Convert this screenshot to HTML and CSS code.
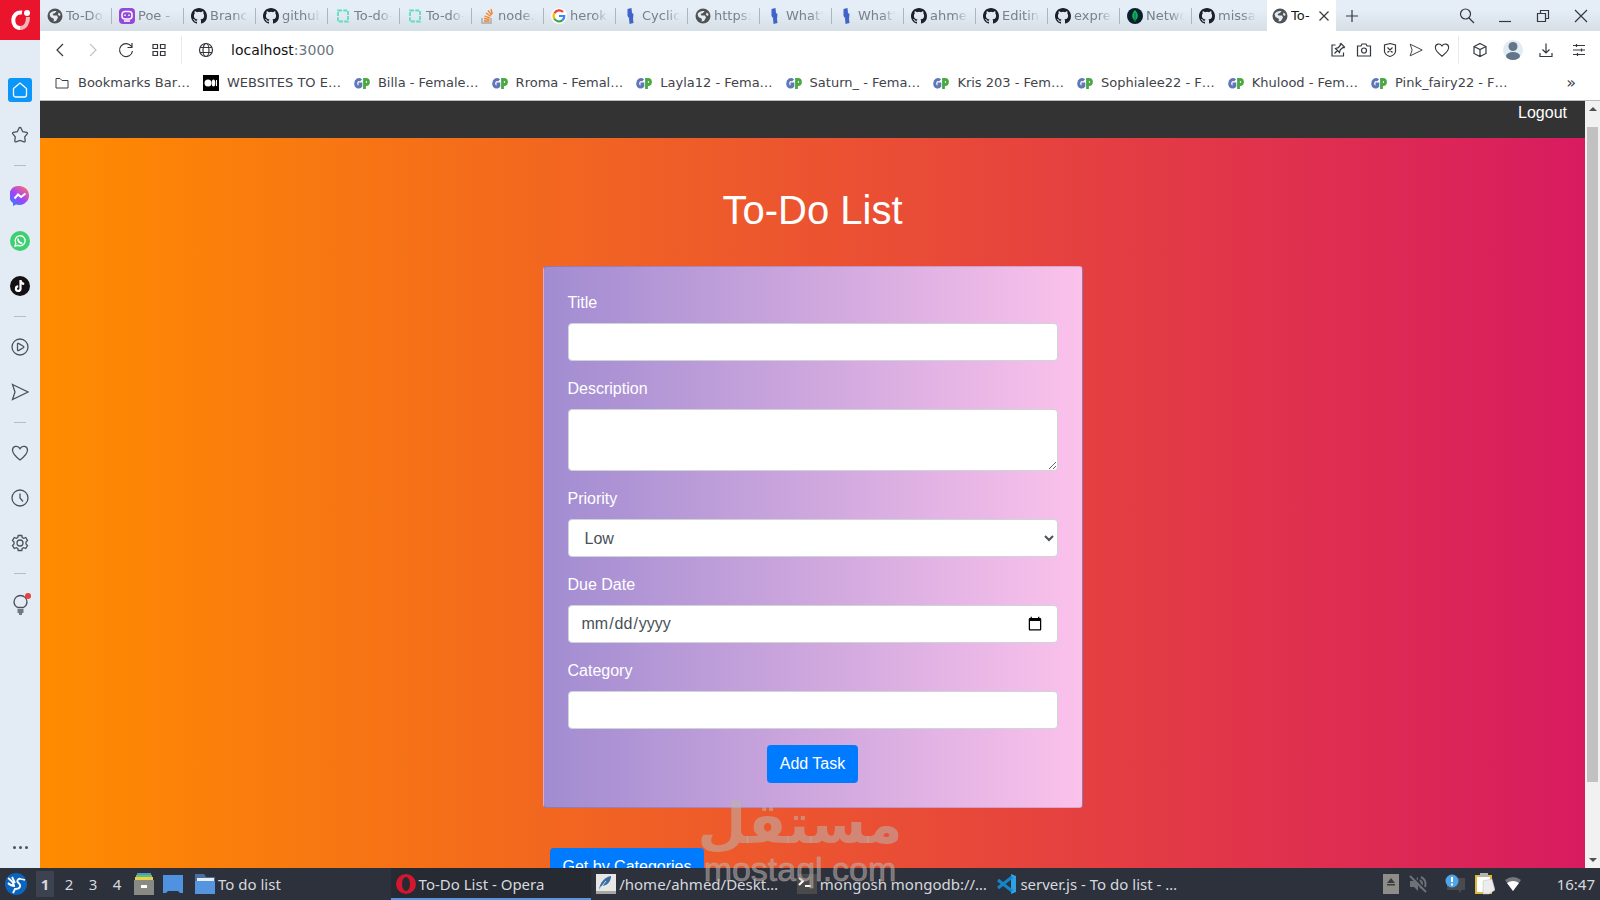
FILE: index.html
```
<!DOCTYPE html>
<html lang="en">
<head>
    <meta charset="UTF-8">
    <meta name="viewport" content="width=device-width">
    <title>To-Do List</title>
    <link rel="stylesheet" href="styles.css">
</head>
<body>
<svg class="sprite" aria-hidden="true">
    <symbol id="earth" viewBox="0 0 16 16"><circle cx="8" cy="8" r="7.5" fill="#505356"/><path d="M2.500 6C4 3.500 7 2.500 9.500 3L8 5 5.500 6l1 1.500H10l1 2-2 3.500-2.500.5.500-2.500L3.500 9zM11.500 4.500l2 1.500-.5 2-2-1z" fill="#e4ebf2"/></symbol>
    <symbol id="github" viewBox="0 0 16 16"><path fill="#1b2029" d="M8 0C3.58 0 0 3.58 0 8c0 3.54 2.29 6.53 5.47 7.59.4.07.55-.17.55-.38 0-.19-.01-.82-.01-1.49-2.01.37-2.53-.49-2.69-.94-.09-.23-.48-.94-.82-1.13-.28-.15-.68-.52-.01-.53.63-.01 1.08.58 1.23.82.72 1.21 1.87.87 2.33.66.07-.52.28-.87.51-1.07-1.78-.2-3.64-.89-3.64-3.95 0-.87.31-1.59.82-2.15-.08-.2-.36-1.02.08-2.12 0 0 .67-.21 2.2.82a7.6 7.6 0 0 1 4 0c1.53-1.04 2.2-.82 2.2-.82.44 1.1.16 1.92.08 2.12.51.56.82 1.27.82 2.15 0 3.07-1.87 3.75-3.65 3.95.29.25.54.73.54 1.48 0 1.07-.01 1.93-.01 2.2 0 .21.15.46.55.38A8.01 8.01 0 0 0 16 8c0-4.42-3.58-8-8-8z"/></symbol>
    <symbol id="poe" viewBox="0 0 16 16"><rect width="16" height="16" rx="4" fill="#9548dc"/><rect x="3" y="3.500" width="10" height="7.500" rx="3" fill="none" stroke="#fff" stroke-width="1.500"/><path d="M6 6.500v1.500M10 6.500v1.500M5 13h6" stroke="#fff" stroke-width="1.500"/></symbol>
    <symbol id="dashed" viewBox="0 0 16 16"><path d="M3 2.500h10v11H3z" fill="none" stroke="#62dcc3" stroke-width="1.800" stroke-dasharray="4 1.200"/></symbol>
    <symbol id="stack" viewBox="0 0 16 16"><path d="M3 10v5h9v-5" fill="none" stroke="#a9a9a9" stroke-width="1.400"/><path d="M5 13h5.500M5 10.500l5.500.8M5.500 8l5.300 1.800M7 5l4.700 3.200M9 2.500l3.700 4.500M12 1l1.300 5" stroke="#f48024" stroke-width="1.300"/></symbol>
    <symbol id="google" viewBox="0 0 16 16"><circle cx="8" cy="8" r="8" fill="#fff"/><path d="M12 4A5.300 5.300 0 0 0 3.500 5.200" stroke="#ea4335" fill="none" stroke-width="2.200"/><path d="M3.400 5.200a5.300 5.300 0 0 0 0 5.600" stroke="#fbbc05" fill="none" stroke-width="2.200"/><path d="M3.400 10.800a5.300 5.300 0 0 0 8.200 1.300" stroke="#34a853" fill="none" stroke-width="2.200"/><path d="M11.500 12.200A5.300 5.300 0 0 0 13.300 8H8" stroke="#4285f4" fill="none" stroke-width="2.200"/></symbol>
    <symbol id="cyclic" viewBox="0 0 16 16"><path d="M4.500 1l4-1 .5 5 1.500 1-.5 5 .5 4-4 1-.5-6L4.500 8z" fill="#3f63c8"/></symbol>
    <symbol id="mongo" viewBox="0 0 16 16"><circle cx="8" cy="8" r="8" fill="#04212c"/><path d="M8 2c4 4 3.500 8 0 11C4.500 10 4 6 8 2z" fill="#13b258"/><path d="M8 5v9" stroke="#0c6b3a"/></symbol>
    <symbol id="gp" viewBox="0 0 16 16"><path d="M7 5.500C5 3.500 1.700 5 1.700 8.500S5 13 6.800 11V9H4.500" fill="none" stroke="#5f78b8" stroke-width="3"/><path d="M10.500 14V4.500h1.500a2.200 2.200 0 0 1 0 5h-1.500" fill="none" stroke="#4aa944" stroke-width="2.800"/></symbol>
    <symbol id="heart" viewBox="0 0 18 18"><path d="M9 16C4 12 1.500 9.500 1.500 6.200 1.500 2 6.800.8 9 4.600 11.200.8 16.500 2 16.500 6.200 16.500 9.500 14 12 9 16z"/></symbol>
    <symbol id="send" viewBox="0 0 18 18"><path d="M1.500 1.500L17 9 1.500 16.500 4 9z"/></symbol>
</svg>

<div class="desktop">
    <div class="browser">
        <aside class="sidebar">
            <a class="opera" href="#" aria-label="Opera menu">
                <svg width="40" height="40" viewBox="0 0 40 40"><path d="M28 17c0 7-3 11-8 11" fill="none" stroke="#f3b4bc" stroke-width="4"/><path d="M22 12.500c-11-1.500-11.500 15.500-2 15.500" fill="none" stroke="#fff" stroke-width="4"/><circle cx="27" cy="13" r="3" fill="#fff"/></svg>
            </a>
            <nav class="side-nav">
                <a class="side-item" href="#" aria-label="Home"><span class="home"><svg width="18" height="18" viewBox="0 0 18 18"><path d="M2.500 7.500L9 2l6.500 5.500v6.500a2 2 0 0 1-2 2h-9a2 2 0 0 1-2-2z"/></svg></span></a>
                <a class="side-item" href="#" aria-label="Pinboards"><svg width="18" height="18" viewBox="0 0 18 18"><path d="M9 1.500q.8 0 1.200 1l1.500 3.200 4 .7q1.200.4.500 1.500l-2.500 3 .5 4q0 1.300-1.200 1L9 14.500l-4 1.400q-1.200.3-1.200-1l.5-4-2.500-3q-.7-1.100.5-1.500l4-.7 1.500-3.200q.4-1 1.200-1z"/></svg></a>
                <hr>
                <a class="side-item" href="#" aria-label="Messenger"><svg width="20" height="20" viewBox="0 0 20 20"><defs><linearGradient id="msg" x1="0" y1="1" x2=".8" y2="0"><stop offset="0" stop-color="#1b8cff"/><stop offset=".5" stop-color="#9a45ff"/><stop offset="1" stop-color="#ff6a70"/></linearGradient></defs><path d="M10 0a10 9.500 0 1 1-4 18.500L3 20v-3A10 9.500 0 0 1 10 0z" fill="url(#msg)" stroke="none"/><path d="M4.500 12.500l3.500-4 3 2.500 4.500-3.500" stroke="#fff" stroke-width="2"/></svg></a>
                <a class="side-item" href="#" aria-label="WhatsApp"><svg width="20" height="20" viewBox="0 0 20 20"><circle cx="10" cy="10" r="10" fill="#3cd070" stroke="none"/><path d="M5 15l.8-2.700A5 5 0 1 1 8 14.300z" stroke="#fff"/><path d="M8 7.500c0 3 1.800 4.500 4.300 4.800" stroke="#fff" stroke-width="1.700"/></svg></a>
                <a class="side-item" href="#" aria-label="TikTok"><svg width="20" height="20" viewBox="0 0 20 20"><circle cx="10" cy="10" r="10" fill="#151014" stroke="none"/><path d="M10.500 4v9a2.300 2.300 0 1 1-2.300-2.700M10.500 4.500c.5 2.500 2 3.300 3.700 3.500" stroke="#fff" stroke-width="2.200"/></svg></a>
                <hr>
                <a class="side-item" href="#" aria-label="Player"><svg width="18" height="18" viewBox="0 0 18 18"><circle cx="9" cy="9" r="8"/><path d="M6.500 6q0-1 1-.6l4.800 2.800q1 .8 0 1.600l-4.800 2.800q-1 .4-1-.6z"/></svg></a>
                <a class="side-item" href="#" aria-label="My Flow"><svg width="18" height="18"><use href="#send"/></svg></a>
                <hr>
                <a class="side-item" href="#" aria-label="Bookmarks"><svg width="18" height="18"><use href="#heart"/></svg></a>
                <a class="side-item" href="#" aria-label="History"><svg width="18" height="18" viewBox="0 0 18 18"><circle cx="9" cy="9" r="8"/><path d="M9 4.500V9l3 3.500"/></svg></a>
                <a class="side-item" href="#" aria-label="Settings"><svg width="18" height="18" viewBox="0 0 18 18"><circle cx="9" cy="9" r="3"/><path d="M7.200 1.500h3.600l.4 2 1.500.8 2-.8 1.800 3-1.500 1.500v2l1.500 1.500-1.800 3-2-.8-1.500.8-.4 2H7.200l-.4-2-1.500-.8-2 .8-1.800-3L3 10V8L1.500 6.500l1.800-3 2 .8 1.500-.8z"/></svg></a>
                <hr>
                <a class="side-item" href="#" aria-label="Tips"><svg width="22" height="22" viewBox="0 0 22 22"><path d="M8.500 14.500C6 13 5 11 5 9a6.500 6.500 0 0 1 13 0c0 2-1 4-3.500 5.500zM8.500 17h6M8.500 19h6M10 21h3"/><circle cx="19" cy="3" r="3" fill="#e5413e" stroke="none"/></svg></a>
            </nav>
            <button class="more" aria-label="More"><i></i><i></i><i></i></button>
        </aside>

        <div class="window">
            <div class="tabs">
                <a class="tab" href="#"><svg><use href="#earth"/></svg><span>To-Do</span></a>
                <a class="tab" href="#"><svg><use href="#poe"/></svg><span>Poe -</span></a>
                <a class="tab" href="#"><svg><use href="#github"/></svg><span>Branc</span></a>
                <a class="tab" href="#"><svg><use href="#github"/></svg><span>github</span></a>
                <a class="tab" href="#"><svg><use href="#dashed"/></svg><span>To-do-</span></a>
                <a class="tab" href="#"><svg><use href="#dashed"/></svg><span>To-do-</span></a>
                <a class="tab" href="#"><svg><use href="#stack"/></svg><span>node.j</span></a>
                <a class="tab" href="#"><svg><use href="#google"/></svg><span>herok</span></a>
                <a class="tab" href="#"><svg><use href="#cyclic"/></svg><span>Cyclic</span></a>
                <a class="tab" href="#"><svg><use href="#earth"/></svg><span>https:</span></a>
                <a class="tab" href="#"><svg><use href="#cyclic"/></svg><span>What'</span></a>
                <a class="tab" href="#"><svg><use href="#cyclic"/></svg><span>What'</span></a>
                <a class="tab" href="#"><svg><use href="#github"/></svg><span>ahme</span></a>
                <a class="tab" href="#"><svg><use href="#github"/></svg><span>Editin</span></a>
                <a class="tab" href="#"><svg><use href="#github"/></svg><span>expre</span></a>
                <a class="tab" href="#"><svg><use href="#mongo"/></svg><span>Netwo</span></a>
                <a class="tab" href="#"><svg><use href="#github"/></svg><span>missa</span></a>
                <div class="tab active"><svg><use href="#earth"/></svg><span>To-</span><button aria-label="Close tab"><svg width="12" height="12" viewBox="0 0 12 12"><path d="M1.500 1.500l9 9M10.500 1.500l-9 9"/></svg></button></div>
                <button class="new-tab" aria-label="New tab"><svg width="12" height="12" viewBox="0 0 12 12"><path d="M6 0v12M0 6h12"/></svg></button>
                <div class="win-buttons">
                    <button aria-label="Search tabs"><svg width="16" height="16" viewBox="0 0 16 16"><circle cx="6.500" cy="6" r="5"/><path d="M10 10l5 5"/></svg></button>
                    <button aria-label="Minimize"><svg width="14" height="14" viewBox="0 0 14 14"><path d="M1 12.500h12"/></svg></button>
                    <button aria-label="Restore"><svg width="14" height="14" viewBox="0 0 14 14"><path d="M1.500 4.500h8v8h-8zM4.500 4.500v-3h8v8h-3"/></svg></button>
                    <button aria-label="Close"><svg width="14" height="14" viewBox="0 0 14 14"><path d="M1 1l12 12M13 1L1 13"/></svg></button>
                </div>
            </div>

            <div class="address">
                <div class="nav-buttons">
                    <button aria-label="Back"><svg width="16" height="16" viewBox="0 0 16 16"><path d="M11 2L5 8l6 6"/></svg></button>
                    <button class="off" aria-label="Forward"><svg width="16" height="16" viewBox="0 0 16 16"><path d="M5 2l6 6-6 6"/></svg></button>
                    <button aria-label="Reload"><svg width="16" height="16" viewBox="0 0 16 16"><path d="M13.500 4.500A6.500 6.500 0 1 0 14.500 9M14 1v4.500H9.500"/></svg></button>
                    <button aria-label="Speed dial"><svg width="16" height="16" viewBox="0 0 16 16"><path d="M2 2.500h4.500v4H2zM9.500 2.500H14v4H9.500zM2 9.500h4.500v4H2zM9.500 9.500H14v4H9.500z"/></svg></button>
                </div>
                <div class="url">
                    <svg width="16" height="16" viewBox="0 0 16 16"><circle cx="8" cy="8" r="6.500"/><ellipse cx="8" cy="8" rx="3" ry="6.500"/><path d="M2 5.500h12M2 10.500h12"/></svg>
                    <span>localhost<em>:3000</em></span>
                </div>
                <div class="page-actions">
                    <button aria-label="Pin page"><svg width="16" height="16" viewBox="0 0 16 16"><path d="M5.500 3H2v11h11.500v-3.500M4.500 11.500l3-3M5.500 6.500l4 4 .8-2.800L13 5.500l1 .3.500-.8-3.500-3.500-.8.500.3 1-2.200 2.700z"/></svg></button>
                    <button aria-label="Snapshot"><svg width="16" height="16" viewBox="0 0 16 16"><path d="M1.500 4H5l1-2h4l1 2h3.500v10h-13z"/><circle cx="8" cy="8.500" r="2.500"/></svg></button>
                    <button aria-label="Ad blocker"><svg width="16" height="16" viewBox="0 0 16 16"><path d="M8 1.500l5.500 1.500v6.500Q13 13 8 14.500 3 13 2.500 9.500V3zM5.500 5.500l5 5M10.500 5.500l-5 5"/></svg></button>
                    <button aria-label="My Flow"><svg width="14" height="14"><use href="#send"/></svg></button>
                    <button aria-label="Add to bookmarks"><svg width="16" height="16"><use href="#heart"/></svg></button>
                </div>
                <div class="extensions">
                    <button aria-label="Extensions"><svg width="16" height="16" viewBox="0 0 16 16"><path d="M8 1.500l6 3v7l-6 3-6-3v-7zM2 4.500l6 3 6-3M8 7.500v7"/></svg></button>
                    <button aria-label="Profile"><svg width="20" height="20" viewBox="0 0 20 20"><circle cx="10" cy="10" r="10" fill="#e1ebf4" stroke="none"/><circle cx="10" cy="6.500" r="4.500" fill="#64758a" stroke="none"/><ellipse cx="10" cy="16" rx="7" ry="4" fill="#64758a" stroke="none"/></svg></button>
                    <button aria-label="Downloads"><svg width="16" height="16" viewBox="0 0 16 16"><path d="M8 1.500v9M4.500 7.500L8 11l3.500-3.500M2 11v3.500h12V11"/></svg></button>
                    <button aria-label="Easy setup"><svg width="16" height="16" viewBox="0 0 16 16"><path d="M2 3.500h12M2 8h12M2 12.500h12M5.500 2v3M10.500 6.500v3M6.500 11v3"/></svg></button>
                </div>
            </div>

            <nav class="bookmarks">
                <a href="#"><svg viewBox="0 0 16 16"><path d="M2 13V3.500h4l2 2h6V13z" fill="none" stroke="#3b3f44"/></svg>Bookmarks Bar…</a>
                <a href="#"><svg viewBox="0 0 16 16"><path d="M0 0h16v16H0z"/><circle cx="5" cy="8" r="3.500" fill="#fff"/><ellipse cx="10.500" cy="8" rx="1.800" ry="3.500" fill="#fff"/><path d="M13.500 5v6" stroke="#fff"/></svg>WEBSITES TO E…</a>
                <a href="#"><svg><use href="#gp"/></svg>Billa - Female…</a>
                <a href="#"><svg><use href="#gp"/></svg>Rroma - Femal…</a>
                <a href="#"><svg><use href="#gp"/></svg>Layla12 - Fema…</a>
                <a href="#"><svg><use href="#gp"/></svg>Saturn_ - Fema…</a>
                <a href="#"><svg><use href="#gp"/></svg>Kris 203 - Fem…</a>
                <a href="#"><svg><use href="#gp"/></svg>Sophialee22 - F…</a>
                <a href="#"><svg><use href="#gp"/></svg>Khulood - Fem…</a>
                <a href="#"><svg><use href="#gp"/></svg>Pink_fairy22 - F…</a>
                <button aria-label="More bookmarks">»</button>
            </nav>

            <div class="viewport">
                <main class="page">
                    <header class="navbar"><a href="#">Logout</a></header>
                    <div class="container">
                        <h1>To-Do List</h1>
                        <form class="card">
                            <div class="form-group">
                                <label for="title">Title</label>
                                <input class="form-control" id="title" type="text">
                            </div>
                            <div class="form-group">
                                <label for="description">Description</label>
                                <textarea class="form-control" id="description" rows="2"></textarea>
                            </div>
                            <div class="form-group">
                                <label for="priority">Priority</label>
                                <select class="form-control" id="priority">
                                    <option>Low</option>
                                    <option>Medium</option>
                                    <option>High</option>
                                </select>
                            </div>
                            <div class="form-group">
                                <label for="date">Due Date</label>
                                <input class="form-control" id="date" type="date">
                            </div>
                            <div class="form-group">
                                <label for="category">Category</label>
                                <input class="form-control" id="category" type="text">
                            </div>
                            <button class="btn" type="button">Add Task</button>
                        </form>
                        <div class="actions">
                            <button class="btn" type="button">Get by Categories</button>
                        </div>
                    </div>
                </main>
                <div class="scrollbar">
                    <i class="up"></i>
                    <div class="track"><div class="thumb"></div></div>
                    <i class="down"></i>
                </div>
            </div>
        </div>
    </div>

    <footer class="taskbar">
        <button class="start" aria-label="Menu"><svg width="22" height="22" viewBox="0 0 22 22"><circle cx="11" cy="11" r="11" fill="#0b65bd"/><path d="M3 5c3 2 5 4 6 7M7 4l3 6M3 10c2 2 4 3 7 3M20 7l-4-1c-3-1-5 2-2.500 4 3 2.500 2 6-3.500 6L8 20" fill="none" stroke="#fff" stroke-width="1.800"/></svg></button>
        <div class="desks">
            <button class="current">1</button>
            <button>2</button>
            <button>3</button>
            <button>4</button>
        </div>
        <div class="launchers">
            <button aria-label="Files"><svg width="20" height="22" viewBox="0 0 20 22"><path d="M3 0h14v3H3z" fill="#4a9ad4"/><path d="M2 2h16v3H2z" fill="#6bbf62"/><path d="M1 4h18v4H1z" fill="#e8cf52"/><path d="M0 7h20v15H0z" fill="#8a8a85"/><path d="M7 12h6v3H7z" fill="#fff"/></svg></button>
            <button aria-label="Show desktop"><svg width="20" height="20" viewBox="0 0 20 20"><path d="M0 1h20v18h-3l-2-2H5l-2 2H0z" fill="#4f93e0"/></svg></button>
        </div>
        <div class="tasks">
            <button class="task"><svg viewBox="0 0 20 20"><path d="M0 0h9l2 3h9v5H0z" fill="#4a6fa3"/><path d="M2 4h17v5H2z" fill="#e8eef5"/><path d="M0 7h20v13H0z" fill="#5595e0"/></svg>To do list</button>
            <button class="task open"><svg viewBox="0 0 20 20"><ellipse cx="10" cy="10" rx="10" ry="10" fill="#d3172e"/><ellipse cx="10" cy="10" rx="4" ry="7" fill="#262a33"/></svg>To-Do List - Opera</button>
            <button class="task"><svg viewBox="0 0 20 20"><path d="M0 0h20v20H0z" fill="#e7e7e5"/><path d="M0 17h20v3H0z" fill="#a6a6a4"/><path d="M3 16C4 8 9 3 15 2c0 6-4 10-10 10z" fill="#3b6ea5"/><path d="M3 16l7-9" stroke="#cfdcea"/></svg>/home/ahmed/Deskt…</button>
            <button class="task"><svg viewBox="0 0 20 20"><path d="M0 0h20v20H0z" fill="#4a4a4a"/><path d="M2 4l4 3-4 4" fill="none" stroke="#fff" stroke-width="2"/><path d="M8 12h6" stroke="#fff" stroke-width="2"/></svg>mongosh mongodb://…</button>
            <button class="task"><svg viewBox="0 0 20 20"><path d="M14 0l5 2v16l-5 2z" fill="#2ba2e6"/><path d="M1 6l14 11M1 14L15 3" stroke="#1684c8" stroke-width="3"/></svg>server.js - To do list - …</button>
        </div>
        <div class="tray">
            <svg width="16" height="20" viewBox="0 0 16 20"><path d="M0 0h16v20H0z" fill="#8d8d8a"/><path d="M8 4l4 5H4zM4 10h8v1.500H4z" fill="#3c3c3c"/></svg>
            <svg width="18" height="18" viewBox="0 0 18 18"><path d="M1 6h4l4-4v14l-4-4H1z" fill="#6d7178"/><path d="M11 5q4 4 0 8M12 2q6 3 4 10" fill="none" stroke="#6d7178" stroke-width="2"/><path d="M2 0l16 16" stroke="#2d313c" stroke-width="2"/><path d="M1 1l16 16" stroke="#6d7178" stroke-width="2"/></svg>
            <svg class="notify" width="20" height="20" viewBox="0 0 20 20"><path d="M2 4h18v12h-4v3l-3-3H2z" fill="#484b50"/><circle cx="7" cy="7" r="6.500" fill="#4ea5e8"/><path d="M7 3v5M7 9.500v2" stroke="#fff" stroke-width="2"/></svg>
            <svg width="20" height="22" viewBox="0 0 20 22"><path d="M0 2h17v19H0z" fill="#e0b93a"/><path d="M2 4h13v15H2z" fill="#fff"/><path d="M5 0h8v4H5z" fill="#b5b5b0"/><path d="M8 8l9-2 3 11-6 4H8z" fill="#ececec" stroke="#bbb" stroke-width=".5"/></svg>
            <svg width="16" height="14" viewBox="0 0 16 14"><path d="M0 3q8-6 16 0l-8 11z" fill="#74777c"/><path d="M2 6q6-4 12 0l-6 8z" fill="#fff"/></svg>
            <time>16:47</time>
        </div>
    </footer>

    <div class="watermark">
        <span class="mark-ar" lang="ar" dir="rtl">مستقل</span>
        <span class="mark-en">mostaql.com</span>
    </div>
</div>
</body>
</html>
```
FILE: styles.css
```
*{
    box-sizing: border-box;
    margin: 0;
    padding: 0;
}
html,body{
    height: 100%;
    overflow: hidden;
}
body{
    font-family: "Liberation Sans", Arial, sans-serif;
    font-size: 16px;
    line-height: 24px;
}
a{
    color: inherit;
    text-decoration: none;
}
button{
    border: 0;
    background: none;
    color: inherit;
    font: inherit;
}
svg{
    display: block;
    flex: none;
}
.sprite{
    display: none;
}
.desktop{
    height: 100%;
    display: flex;
    flex-direction: column;
    position: relative;
}
.browser{
    flex: 1;
    min-height: 0;
    display: flex;
}

/* sidebar */
.sidebar{
    width: 40px;
    background: #e3ecf4;
    display: flex;
    flex-direction: column;
}
.opera{
    background: #ea152c;
}
.side-nav{
    flex: 1;
    padding-top: 27px;
}
.side-item{
    height: 45px;
    display: flex;
    align-items: center;
    justify-content: center;
}
.side-item svg{
    fill: none;
    stroke: #4b525b;
    stroke-width: 1.3;
}
.home{
    width: 24px;
    height: 24px;
    border-radius: 3px;
    background: #0a96fb;
    display: flex;
    align-items: center;
    justify-content: center;
}
.home svg{
    stroke: #fff;
}
.side-nav hr{
    width: 12px;
    height: 1px;
    margin: 8px auto 7px;
    border: 0;
    background: #b4bec8;
}
.more{
    height: 42px;
    display: flex;
    align-items: center;
    justify-content: center;
    gap: 3px;
}
.more i{
    width: 3px;
    height: 3px;
    border-radius: 50%;
    background: #4b525b;
}

/* browser chrome */
.window{
    flex: 1;
    min-width: 0;
    display: flex;
    flex-direction: column;
    background: #fff;
    font-family: "DejaVu Sans", sans-serif;
}
.tabs{
    height: 31px;
    display: flex;
    background: linear-gradient(#e5eef6 30%, #d6dfe6);
    font-size: 13px;
}
.tab{
    flex: 0 1 72px;
    min-width: 0;
    padding: 0 6px 0 7px;
    display: flex;
    align-items: center;
    gap: 3px;
    color: #77818b;
    background: linear-gradient(#adb5bd, #adb5bd) right center / 1px 16px no-repeat;
}
.tab > svg{
    width: 16px;
    height: 16px;
}
.tab span{
    flex: 1;
    overflow: hidden;
    white-space: nowrap;
    -webkit-mask-image: linear-gradient(90deg, #000 60%, transparent 95%);
    mask-image: linear-gradient(90deg, #000 60%, transparent 95%);
}
.tab:nth-child(17){
    background: none;
}
.tab.active{
    flex-basis: 69px;
    margin-left: 3px;
    padding-left: 5px;
    background: #fff;
    color: #16191c;
}
.tab.active span{
    -webkit-mask-image: none;
    mask-image: none;
}
.tabs button,
.address button{
    display: flex;
    align-items: center;
    justify-content: center;
}
.tabs button svg,
.address svg{
    fill: none;
    stroke: #33383e;
    stroke-width: 1.2;
}
.new-tab{
    width: 32px;
}
.win-buttons{
    margin-left: auto;
    display: flex;
}
.win-buttons button{
    width: 38px;
}
.address{
    height: 38px;
    padding-right: 5px;
    display: flex;
    align-items: center;
}
.nav-buttons{
    padding: 0 6px 0 3px;
    display: flex;
    border-right: 1px solid #e6e9ed;
}
.nav-buttons button{
    width: 33px;
    height: 28px;
}
.address .off svg{
    stroke: #c0c4c8;
}
.url{
    flex: 1;
    padding-left: 16px;
    display: flex;
    align-items: center;
    gap: 17px;
    font-size: 14px;
    color: #111;
}
.url em{
    font-style: normal;
    color: #6b7580;
}
.page-actions{
    padding-right: 3px;
    display: flex;
    border-right: 1px solid #e6e9ed;
}
.page-actions button{
    width: 26px;
    height: 28px;
}
.extensions{
    padding-left: 4px;
    display: flex;
}
.extensions button{
    width: 33px;
}
.bookmarks{
    height: 32px;
    padding: 0 24px 3px 14px;
    display: flex;
    align-items: center;
    gap: 13px;
    border-bottom: 1px solid #b9bcbf;
    font-size: 13px;
    color: #3f444a;
    white-space: nowrap;
}
.bookmarks a{
    display: flex;
    align-items: center;
    gap: 8px;
}
.bookmarks svg{
    width: 16px;
    height: 16px;
}
.bookmarks button{
    margin-left: auto;
    font-size: 16px;
}

/* to-do page */
.viewport{
    flex: 1;
    min-height: 0;
    display: flex;
    font-family: "Liberation Sans", Arial, sans-serif;
}
.page{
    flex: 1;
    overflow: hidden;
    background: linear-gradient(to right, #ff8c00, #d81b60);
    color: #fff;
}
.navbar{
    padding: 0 18px 13px;
    background: #333;
    text-align: right;
}
.container{
    max-width: 540px;
    margin: 0 auto;
}
h1{
    padding: 48px 0 32px;
    font-size: 40px;
    font-weight: normal;
    line-height: 48px;
    text-align: center;
}
.card{
    padding: 24px;
    border: 1px solid rgba(0,0,0,.125);
    border-radius: 4px;
    background: linear-gradient(to right, #a18cd1, #fbc2eb);
}
.form-group{
    margin-bottom: 16px;
}
.form-group label{
    display: block;
    margin-bottom: 8px;
}
.form-control{
    display: block;
    width: 100%;
    height: 38px;
    padding: 6px 12px;
    border: 1px solid #ced4da;
    border-radius: 4px;
    background: #fff;
    color: #495057;
    font: inherit;
}
textarea.form-control{
    height: auto;
    resize: vertical;
}
.btn{
    display: block;
    height: 38px;
    padding: 6px 13px;
    border-radius: 4px;
    background: #007bff;
    color: #fff;
}
.card .btn{
    margin: 0 auto;
}
.actions{
    padding: 40px 7px;
}
.scrollbar{
    width: 15px;
    background: #f1f1f1;
    display: flex;
    flex-direction: column;
    align-items: center;
}
.scrollbar i{
    border: 4px solid transparent;
}
.scrollbar .up{
    margin: 2px 0 6px;
    border-bottom-color: #505050;
}
.scrollbar .down{
    margin: 6px 0 2px;
    border-top-color: #505050;
}
.track{
    flex: 1;
    padding: 10px 0 70px;
}
.thumb{
    width: 11px;
    height: 100%;
    background: #c1c1c1;
}

/* taskbar */
.taskbar{
    height: 32px;
    padding: 0 5px;
    display: flex;
    align-items: center;
    background: #2d313c;
    color: #d6d9df;
    font-family: "Noto Sans", sans-serif;
    font-size: 15px;
}
.desks{
    padding: 0 5px 0 6px;
    display: flex;
}
.desks button{
    width: 24px;
    height: 26px;
}
.desks .current{
    background: linear-gradient(#3d4250, #3d4250) center / 18px 26px no-repeat;
    font-weight: bold;
}
.launchers{
    display: flex;
    gap: 9px;
    align-items: center;
}
.tasks{
    flex: 0 1 1010px;
    min-width: 0;
    height: 100%;
    padding-left: 7px;
    display: flex;
}
.task{
    flex: 1;
    min-width: 0;
    padding: 0 5px;
    display: flex;
    align-items: center;
    gap: 3px;
    white-space: nowrap;
    overflow: hidden;
}
.task svg{
    width: 20px;
    height: 20px;
}
.task.open{
    background: linear-gradient(#5b94dc, #5b94dc) bottom / 100% 2px no-repeat #262a33;
}
.tray{
    margin-left: auto;
    display: flex;
    align-items: center;
    gap: 10px;
}
.tray .notify{
    margin-left: 8px;
}
.tray time{
    padding-left: 26px;
}

/* site mark over the whole screen */
.watermark{
    position: absolute;
    left: 0;
    right: 0;
    bottom: 14px;
    display: flex;
    flex-direction: column;
    align-items: center;
    color: rgba(190,178,172,.55);
    pointer-events: none;
}
.mark-ar{
    font: bold 56px/56px "DejaVu Sans", sans-serif;
}
.mark-en{
    font-size: 34px;
    line-height: 34px;
    -webkit-text-stroke: 1px rgba(190,178,172,.4);
}
```
